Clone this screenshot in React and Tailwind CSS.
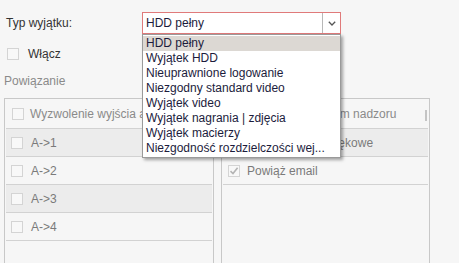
import React from 'react';

// --- small pieces ---
const Box = ({ checked = false, className = '' }) => (
    <span className={`inline-flex items-center justify-center w-[12px] h-[12px] border border-[#d4d4d4] bg-[#f8f8f8] shrink-0 ${className}`}>
        {checked && (
            <svg width="10" height="10" viewBox="0 0 10 10">
                <path d="M1.5 5.2 L4 7.6 L8.6 1.8" fill="none" stroke="#b4b4b4" strokeWidth="1.6" />
            </svg>
        )}
    </span>
);

const Row = ({ label, gray, checked, textPad = 'ml-[8px]' }) => (
    <div className={`flex items-center h-[28px] border-b border-[#d2d2d2] pl-[5px] ${gray ? 'bg-[#ececec]' : ''}`}>
        <Box checked={checked} />
        <span className={`${textPad} text-[#7a7a7a]`}>{label}</span>
    </div>
);

const options = [
    'HDD pełny',
    'Wyjątek HDD',
    'Nieuprawnione logowanie',
    'Niezgodny standard video',
    'Wyjątek video',
    'Wyjątek nagrania | zdjęcia',
    'Wyjątek macierzy',
    'Niezgodność rozdzielczości wej...',
];

export default function App() {
    return (
        <div className="w-[459px] h-[263px] overflow-hidden bg-[#f6f6f6] text-[12px] leading-[14px] font-['Liberation_Sans',Arial,sans-serif]">
            {/* TYPE SELECT */}
            <div className="flex items-center h-[22px] mt-[12px]">
                <span className="w-[142px] pl-[6px] text-[#333]">Typ wyjątku:</span>
                <div className="relative z-10">
                    <div className="flex items-center w-[199px] h-[22px] bg-white border border-[#e07a7a]">
                        <span className="flex-1 pl-[3px] text-[#1c1c3c]">HDD pełny</span>
                        <span className="flex items-center justify-center w-[18px] h-full border-l border-[#b8b8b8]">
                            <svg width="8" height="5" viewBox="0 0 8 5">
                                <path d="M0.8 0.8 L4 4 L7.2 0.8" fill="none" stroke="#555" strokeWidth="1.3" />
                            </svg>
                        </span>
                    </div>
                    <ul className="absolute left-0 top-[22px] w-[199px] bg-white border border-[#9a9a9a] py-[1px] shadow-[2px_2px_3px_rgba(0,0,0,0.35)]">
                        {options.map((o, i) => (
                            <li key={o} className={`h-[15px] leading-[15px] pl-[3px] text-[#1c1c3c] whitespace-nowrap ${i === 0 ? 'bg-[#dcd8d3]' : ''}`}>
                                {o}
                            </li>
                        ))}
                    </ul>
                </div>
            </div>

            {/* ENABLE */}
            <div className="flex items-center h-[12px] mt-[14px] pl-[7px]">
                <Box className="w-[11px] h-[11px]" />
                <span className="ml-[9px] text-[#333]">Włącz</span>
            </div>

            <div className="mt-[14px] pl-[4px] h-[14px] text-[#8a8a8a]">Powiązanie</div>

            {/* LINK PANELS */}
            <div className="flex gap-[7px] mt-[10px] pl-[4px]">
                <div className="w-[210px] h-[200px] border border-[#c8c8c8] px-[1px]">
                    <div className="relative flex items-center h-[30px] border-b border-[#d2d2d2] pl-[6px]">
                        <Box className="w-[11px] h-[11px]" />
                        <span className="ml-[6px] text-[#8a8a8a] whitespace-nowrap">Wyzwolenie wyjścia alarmowego</span>
                        <span className="absolute right-[1px] top-[11px] w-[2px] h-[11px] bg-[#c4c4c4]" />
                    </div>
                    <Row label="A->1" gray />
                    <Row label="A->2" />
                    <Row label="A->3" gray />
                    <Row label="A->4" />
                </div>
                <div className="w-[209px] h-[200px] border border-[#c8c8c8] px-[1px]">
                    <div className="relative flex items-center h-[30px] border-b border-[#d2d2d2] pl-[6px]">
                        <Box className="w-[11px] h-[11px]" />
                        <span className="ml-[6px] text-[#8a8a8a] whitespace-nowrap">Powiadom centrum nadzoru</span>
                        <span className="absolute right-[1px] top-[11px] w-[2px] h-[11px] bg-[#c4c4c4]" />
                    </div>
                    <Row label="Ostrzeżenie dźwiękowe" gray textPad="ml-[7px]" />
                    <Row label="Powiąż email" checked textPad="ml-[7px]" />
                </div>
            </div>
        </div>
    );
}
